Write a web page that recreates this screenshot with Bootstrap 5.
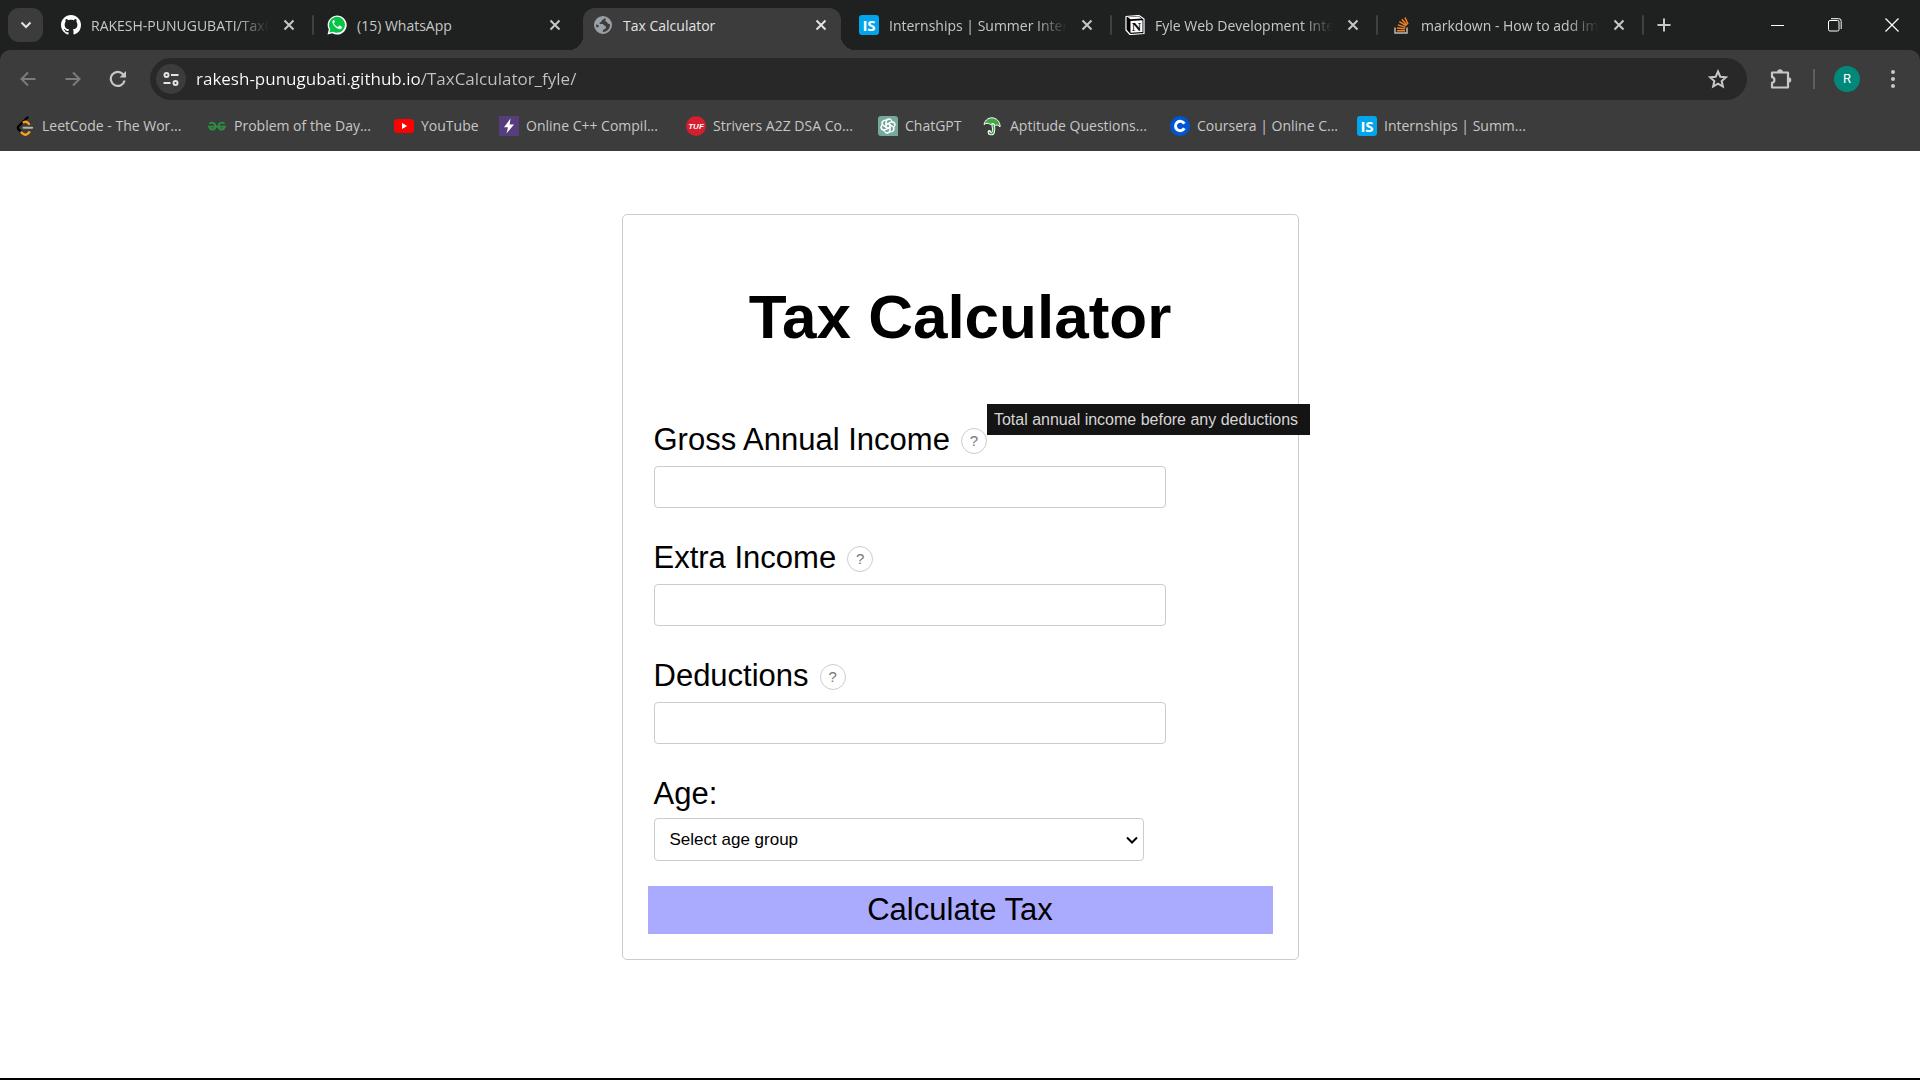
<!DOCTYPE html>
<html lang="en">
<head>
<meta charset="utf-8">
<meta name="viewport" content="width=device-width, initial-scale=1">
<title>Tax Calculator</title>
<link href="https://cdn.jsdelivr.net/npm/bootstrap@5.3.0/dist/css/bootstrap.min.css" rel="stylesheet">
<style>
  body { font-family: "Liberation Sans", Arial, sans-serif; color: #000; background: #fff; }
  button, input, select { font-family: inherit; }

  /* browser chrome */
  .chrome { background: #1f2120; color: #c7c7c7; font-family: "Open Sans", "Noto Sans", sans-serif; font-size: 14px; line-height: 20px; }
  .chrome svg { display: block; flex: none; }
  .plain-btn { background: none; border: 0; padding: 0; color: inherit; display: flex; align-items: center; justify-content: center; flex: none; }
  .tab-strip { height: 50px; }
  .tab-search { width: 35px; height: 34px; border-radius: 11px; background: #3c3c3c; margin: 8px 8px 0 8px; color: #e3e3e3; }
  .tab-box { flex: 0 1 258px; min-width: 0; height: 42px; margin-top: 8px; padding: 0 10px 8px; gap: 10px; position: relative; }
  .tab-box .plain-btn { width: 20px; height: 20px; }
  .tab-title { flex: 1 1 0; min-width: 0; padding-top: 2px; overflow: hidden; white-space: nowrap; color: inherit; text-decoration: none; }
  .tab-title.fade-end { -webkit-mask-image: linear-gradient(90deg, #000 calc(100% - 32px), transparent); mask-image: linear-gradient(90deg, #000 calc(100% - 32px), transparent); }
  .tab-sep { flex: 0 0 8px; height: 20px; margin-top: 15px; display: flex; justify-content: center; }
  .tab-sep.seen::after { content: ""; width: 2px; background: #3f4040; border-radius: 1px; }
  .tab-box.current { background: #3c3c3c; color: #e3e3e3; border-radius: 12px 12px 0 0; }
  .tab-box.current::before, .tab-box.current::after { content: ""; position: absolute; bottom: 0; width: 14px; height: 14px; }
  .tab-box.current::before { right: 100%; background: radial-gradient(circle at 0 0, transparent 14px, #3c3c3c 14px); }
  .tab-box.current::after { left: 100%; background: radial-gradient(circle at 100% 0, transparent 14px, #3c3c3c 14px); }
  .new-tab { width: 34px; height: 34px; margin: 8px 0 0; }
  .win-btn { width: 57px; height: 50px; color: #fff; }

  .toolbar { background: #3c3c3c; border-radius: 10px 10px 0 0; }
  .nav-row { height: 58px; padding-left: 5px; padding-right: 5px; }
  .nav-row .step { width: 45px; height: 42px; color: #7c7c7c; }
  .nav-row .step.ready { color: #c7c7c7; }
  .omnibox { height: 42px; border-radius: 21px; background: #282828; padding: 0 18px 0 6px; margin-left: 10px; gap: 10px; }
  .site-info { width: 30px; height: 30px; border-radius: 50%; background: #3c3c3c; color: #e3e3e3; }
  .url-field { flex: 1 1 0; min-width: 0; border: 0; outline: 0; padding: 0; font-size: 17px; line-height: 24px; color: #fff;
    background: linear-gradient(90deg, #fff 224px, #c3c3c3 224px); -webkit-background-clip: text; background-clip: text; -webkit-text-fill-color: transparent; }
  .ext-btn { width: 42px; margin-left: 13px; }
  .tool-sep { width: 2px; height: 20px; background: #5d5d5d; margin: 0 19px 0 11px; }
  .avatar { width: 26px; height: 26px; border-radius: 50%; background: #00897b; color: #fff; font-family: Roboto, sans-serif; font-size: 13px; }
  .menu-btn { width: 45px; margin-left: 10px; }
  .bookmarks { height: 43px; padding: 0 0 8px 15px; }
  .bookmarks a { color: inherit; text-decoration: none; display: flex; align-items: center; gap: 7px; white-space: nowrap; }
  .bm-l { flex: 0 0 192px; }
  .bm-m { flex: 0 0 187px; }
  .bm-s { flex: 0 0 105px; }

  /* page */
  .calc-card { width: 677px; max-width: 100%; margin-top: 63px; padding: 25px; border: 1px solid #ccc; border-radius: 5px; }
  .calc-card h1 { font-size: 62px; line-height: 72px; font-weight: 700; margin: 41px 0 67px; }
  .calc-form { gap: 30px; padding-left: 6px; }
  .field { gap: 6px; }
  .field.tight { gap: 4px; }
  .field-head { height: 40px; gap: 11px; }
  .field-head label { font-size: 31px; line-height: 40px; }
  .help { position: relative; margin-top: 2px; }
  .help button { width: 26px; height: 26px; border: 1px solid #ccc; border-radius: 50%; background: #fff; color: #777; font-size: 15px; line-height: 24px; padding: 0; display: block; }
  .tip-text { position: absolute; left: 100%; top: -24px; background: #141414; color: #d6d6d6; font-size: 16px; line-height: 21px; padding: 5px 12px 5px 7px; white-space: nowrap; }
  .money { width: 512px; max-width: 100%; height: 42px; border: 1px solid #ccc; border-radius: 4px; padding: 0 12px; font-size: 17px; }
  .age-select { width: 490px; max-width: 100%; height: 43px; border: 1px solid #ccc; border-radius: 4px; color: #000; padding: 0 24px 0 15px; font-size: 17px; -webkit-appearance: none; appearance: none;
    background: #fff url("data:image/svg+xml,%3Csvg xmlns='http://www.w3.org/2000/svg' width='12' height='8' viewBox='0 0 12 8'%3E%3Cpath d='M1 1.500l5 5 5-5' fill='none' stroke='%23000' stroke-width='2'/%3E%3C/svg%3E") no-repeat right 5px center; }
  .calc-btn { width: 100%; margin-top: 25px; height: 48px; border: 0; background: #aaf; color: #000; font-size: 31px; line-height: 36px; padding: 0; }
  .screen-edge { height: 2px; background: #000; }
</style>
<script src="https://cdn.jsdelivr.net/npm/bootstrap@5.3.0/dist/js/bootstrap.bundle.min.js"></script>
</head>
<body class="d-flex flex-column min-vh-100">

<svg width="0" height="0" class="position-absolute" aria-hidden="true">
  <symbol id="x" viewBox="0 0 20 20"><path d="M5.5 5.5l9 9m0-9l-9 9" stroke="currentColor" stroke-width="2" fill="none"/></symbol>
  <symbol id="is" viewBox="0 0 20 20"><rect width="20" height="20" rx="3" fill="#00a5ec"/><text x="10" y="15.5" text-anchor="middle" font-family="Open Sans, sans-serif" font-weight="700" font-size="15" fill="#fff">IS</text></symbol>
</svg>

<header class="chrome">
  <div class="tab-strip d-flex">
    <button class="plain-btn tab-search" aria-label="Search tabs"><svg width="12" height="10" viewBox="0 0 12 10"><path d="M1.5 2.5L6 7l4.500-4.500" fill="none" stroke="currentColor" stroke-width="2"/></svg></button>

    <div class="tab-box d-flex align-items-center">
      <svg width="20" height="20" viewBox="0 0 16 16" fill="#fff"><path d="M8 0C3.580 0 0 3.580 0 8c0 3.540 2.290 6.530 5.470 7.590.4.070.550-.17.550-.38 0-.19-.01-.82-.01-1.490-2.010.37-2.530-.49-2.690-.94-.09-.23-.48-.94-.82-1.130-.28-.15-.68-.52-.01-.53.630-.01 1.080.580 1.230.820.720 1.210 1.870.870 2.330.660.070-.52.280-.87.510-1.070-1.780-.2-3.640-.89-3.640-3.950 0-.87.310-1.590.820-2.150-.08-.2-.36-1.020.080-2.120 0 0 .670-.21 2.200.820.640-.18 1.320-.27 2-.27s1.360.090 2 .270c1.530-1.040 2.200-.82 2.200-.82.440 1.100.160 1.920.080 2.120.510.560.820 1.270.820 2.150 0 3.070-1.870 3.750-3.650 3.950.290.250.540.730.540 1.480 0 1.070-.01 1.930-.01 2.200 0 .210.150.460.550.380A8.010 8.010 0 0 0 16 8c0-4.420-3.580-8-8-8z"/></svg>
      <a class="tab-title fade-end" href="#">RAKESH-PUNUGUBATI/TaxCalculator</a>
      <button class="plain-btn" aria-label="Close tab"><svg width="20" height="20"><use href="#x"/></svg></button>
    </div>
    <span class="tab-sep seen"></span>

    <div class="tab-box d-flex align-items-center">
      <svg width="20" height="20" viewBox="0 0 20 20"><path d="M.5 19.500l1.300-4.900A9.500 9.500 0 1 1 5.400 18.300z" fill="#fff"/><path d="M2.400 17.600l.9-3.300A8 8 0 1 1 6 16.800z" fill="#05c446"/><path d="M7.400 5.300c-.3-.6-.8-.5-1.300 0-1 1-1 2.600.2 4.300 1.600 2.400 3.500 4 5.700 4.500 1.300.3 2.700-.5 2.900-1.700.1-.6 0-.7-.4-.9l-1.800-.9c-.3-.1-.5 0-.7.2l-.8 1c-.2.200-.4.200-.7.100-1.600-.7-2.700-1.800-3.500-3.200-.1-.3 0-.4.100-.6l.7-.9c.1-.2.100-.3 0-.5z" fill="#fff"/></svg>
      <a class="tab-title" href="#">(15) WhatsApp</a>
      <button class="plain-btn" aria-label="Close tab"><svg width="20" height="20"><use href="#x"/></svg></button>
    </div>
    <span class="tab-sep"></span>

    <div class="tab-box current d-flex align-items-center">
      <svg width="20" height="20" viewBox="0 0 20 20"><circle cx="10" cy="10" r="8" fill="#3c3c3c" stroke="#9aa0a6" stroke-width="2"/><path d="M2 9C2 5 5 2 9 2c1.500 0 2.500.3 2.500.8 0 1.200-.8 1.700-1.900 2C8.500 5.100 9 6.400 8 7c-1 .5-1.800.8-1.500 1.500.3.700 2 .3 3.200.500 1.300.3 1.200 1.600 2.300 2 1 .4 1.300 1.200.7 2.200-.7 1.100-2.500 1-2.700 2.300L9.500 18C6 18 3.200 15.500 2.300 12c1.500.4 3.200.3 3.700-.5C5 9.500 3.500 9.500 2 9z" fill="#9aa0a6"/><path d="M12.500 2.500c.8 1 .2 2-.3 3 .2 1.500 1.800 1 2.100 2.200.2 1 1.500 1.400 3.600 1.300C17.500 6 15.500 3.500 12.500 2.500z" fill="#9aa0a6"/></svg>
      <a class="tab-title" href="#">Tax Calculator</a>
      <button class="plain-btn" aria-label="Close tab"><svg width="20" height="20"><use href="#x"/></svg></button>
    </div>
    <span class="tab-sep"></span>

    <div class="tab-box d-flex align-items-center">
      <svg width="20" height="20"><use href="#is"/></svg>
      <a class="tab-title fade-end" href="#">Internships | Summer Internship</a>
      <button class="plain-btn" aria-label="Close tab"><svg width="20" height="20"><use href="#x"/></svg></button>
    </div>
    <span class="tab-sep seen"></span>

    <div class="tab-box d-flex align-items-center">
      <svg width="20" height="20" viewBox="0 0 20 20"><path d="M1 1.500L14 .5l5 3.500v14.500L5 19.500 1 15z" fill="#000" stroke="#fff" stroke-width="1.200" stroke-linejoin="round"/><path d="M2.500 2.300l11-.8 3 2L5.500 4.300z" fill="#fff"/><path d="M5.500 6L17.500 5.300V17L5.500 17.800z" fill="#fff"/><text x="11.500" y="16" text-anchor="middle" font-family="Liberation Serif, serif" font-weight="700" font-size="13" fill="#000">N</text></svg>
      <a class="tab-title fade-end" href="#">Fyle Web Development Internship</a>
      <button class="plain-btn" aria-label="Close tab"><svg width="20" height="20"><use href="#x"/></svg></button>
    </div>
    <span class="tab-sep seen"></span>

    <div class="tab-box d-flex align-items-center">
      <svg width="20" height="20" viewBox="0 0 20 20" fill="none"><path d="M4 12.500v5.500h12v-5.500" stroke="#bcbbbb" stroke-width="1.500"/><path d="M6 15.800h8M6 13l8 .8M6.800 9.900l7.600 2.200M8.300 6.700l6.700 4M10.800 4.200l5.200 6M14 2.500l3 6.800" stroke="#f48024" stroke-width="1.500"/></svg>
      <a class="tab-title fade-end" href="#">markdown - How to add images</a>
      <button class="plain-btn" aria-label="Close tab"><svg width="20" height="20"><use href="#x"/></svg></button>
    </div>
    <span class="tab-sep seen"></span>
    <button class="plain-btn new-tab" aria-label="New tab"><svg width="14" height="14" viewBox="0 0 14 14"><path d="M7 .5v13M.5 7h13" stroke="currentColor" stroke-width="2"/></svg></button>

    <div class="d-flex ms-auto">
      <button class="plain-btn win-btn" aria-label="Minimize"><svg width="13" height="13" viewBox="0 0 13 13"><path d="M0 6.500h13" stroke="currentColor"/></svg></button>
      <button class="plain-btn win-btn" aria-label="Restore"><svg width="14" height="14" viewBox="0 0 14 14" fill="none" stroke="currentColor"><rect x=".5" y="2.500" width="10.500" height="10.500" rx="1.500"/><path d="M3 .7h7.500a2.500 2.500 0 0 1 2.700 2.700V11"/></svg></button>
      <button class="plain-btn win-btn" aria-label="Close"><svg width="14" height="14" viewBox="0 0 14 14"><path d="M.5.5l13 13m0-13l-13 13" stroke="currentColor" stroke-width="1.200"/></svg></button>
    </div>
  </div>

  <div class="toolbar">
    <div class="nav-row d-flex align-items-center">
      <button class="plain-btn step" aria-label="Back"><svg width="16" height="16" viewBox="0 0 16 16"><path d="M15.500 8H2M8 1.500L1.500 8 8 14.500" fill="none" stroke="currentColor" stroke-width="2"/></svg></button>
      <button class="plain-btn step" aria-label="Forward"><svg width="16" height="16" viewBox="0 0 16 16"><path d="M.5 8H14M8 1.500L14.500 8 8 14.500" fill="none" stroke="currentColor" stroke-width="2"/></svg></button>
      <button class="plain-btn step ready" aria-label="Reload"><svg width="18" height="18" viewBox="0 0 18 18"><path d="M15.600 10.500A7 7 0 1 1 14 4.200l1.500 1.500" fill="none" stroke="currentColor" stroke-width="2.200"/><path d="M17 1v6.500h-6.500z" fill="currentColor"/></svg></button>
      <div class="omnibox d-flex align-items-center flex-grow-1">
        <button class="plain-btn site-info" aria-label="View site information"><svg width="16" height="14" viewBox="0 0 16 14" fill="none" stroke="currentColor" stroke-width="2"><circle cx="3.500" cy="3" r="2"/><path d="M8 3h7.500M.5 11h7"/><circle cx="12.500" cy="11" r="2"/></svg></button>
        <input class="url-field" type="text" aria-label="Address" value="rakesh-punugubati.github.io/TaxCalculator_fyle/">
        <button class="plain-btn" aria-label="Bookmark this tab"><svg width="22" height="22" viewBox="0 0 24 24"><path d="M12 3.800l2.500 5.700 6.100.6-4.600 4.100 1.300 6L12 17l-5.300 3.200 1.300-6-4.600-4.100 6.100-.6z" fill="none" stroke="currentColor" stroke-width="2.200"/></svg></button>
      </div>
      <button class="plain-btn ext-btn" aria-label="Extensions"><svg width="22" height="22" viewBox="0 0 22 22"><path d="M2 4.500h16v15H2v-4.700c3.200-.3 3.200-5.300 0-5.600z" fill="none" stroke="currentColor" stroke-width="2.200" stroke-linejoin="round"/><path d="M7.200 4a2.800 2.800 0 0 1 5.600 0zM18.500 9.200a2.800 2.800 0 0 1 0 5.600z" fill="currentColor"/></svg></button>
      <span class="tool-sep"></span>
      <button class="plain-btn avatar" aria-label="Profile">R</button>
      <button class="plain-btn menu-btn" aria-label="Menu"><svg width="6" height="20" viewBox="0 0 6 20" fill="currentColor"><circle cx="3" cy="3" r="2"/><circle cx="3" cy="10" r="2"/><circle cx="3" cy="17" r="2"/></svg></button>
    </div>

    <nav class="bookmarks d-flex align-items-center" aria-label="Bookmarks">
      <a class="bm-l" href="#"><svg width="20" height="20" viewBox="0 0 20 20" fill="none" stroke-linecap="round" stroke-width="2.400"><path d="M12.500 1.500L3.800 10c-1.200 1.200-1.200 2.500 0 3.700l2.700 2.700" stroke="#000"/><path d="M8.700 6.200c1.300-.8 2.700-.7 3.800.3l1.500 1.500M6.500 16.400l1.300 1.200c1.700 1.400 3.500 1.300 5 0l1.500-1.400" stroke="#ffa116"/><path d="M8.500 11.800h8.700" stroke="#b3b3b3" stroke-width="2"/></svg>LeetCode - The Wor...</a>
      <a class="bm-m" href="#"><svg width="20" height="20" viewBox="0 0 20 20" fill="none" stroke="#2f8d46" stroke-width="1.800"><path d="M1 10.700h18M2.500 7.800c2-2 6-1.300 6 2.600 0 3.800-5.500 4.300-6 .5M17.500 7.800c-2-2-6-1.300-6 2.600 0 3.800 5.500 4.300 6 .5"/></svg>Problem of the Day...</a>
      <a class="bm-s" href="#"><svg width="20" height="20" viewBox="0 0 20 20"><rect y="3" width="20" height="14" rx="3.500" fill="#f00"/><path d="M8 7l5.200 3L8 13z" fill="#fff"/></svg>YouTube</a>
      <a class="bm-m" href="#"><svg width="20" height="20" viewBox="0 0 20 20"><path d="M0 0h20v20H0z" fill="#563d7c"/><path d="M11.500 2.500L5 11.200h4l-1.500 6.300L15 8.500h-4.300z" fill="#fff"/></svg>Online C++ Compil...</a>
      <a class="bm-l" href="#"><svg width="20" height="20" viewBox="0 0 20 20"><circle cx="10" cy="10" r="10" fill="#d41f30"/><text x="10" y="13" text-anchor="middle" font-family="Liberation Sans, sans-serif" font-weight="700" font-style="italic" font-size="8" fill="#fff">TUF</text></svg>Strivers A2Z DSA Co...</a>
      <a class="bm-s" href="#"><svg width="20" height="20" viewBox="0 0 20 20"><path d="M3 0h14a3 3 0 0 1 3 3v17H3a3 3 0 0 1-3-3V3a3 3 0 0 1 3-3z" fill="#74aa9c"/><g fill="none" stroke="#fff" stroke-width="1.100"><path id="petal" d="M8 12V6.300c0-3.600 5-4 6.100-.9M8 9l4.800-2.800c2.200-1.200 4.600.5 4.300 3"/><use href="#petal" transform="rotate(60 10 10)"/><use href="#petal" transform="rotate(120 10 10)"/><use href="#petal" transform="rotate(180 10 10)"/><use href="#petal" transform="rotate(240 10 10)"/><use href="#petal" transform="rotate(300 10 10)"/></g></svg>ChatGPT</a>
      <a class="bm-m" href="#"><svg width="20" height="20" viewBox="0 0 20 20"><path d="M10 8.500c.7 2.500 1 5 .3 7.500-.7 2.300-4 2.200-4-.3" fill="none" stroke="#fff" stroke-width="3.400" stroke-linecap="round"/><path d="M1 8.500C2 3.500 6.500 1 10.500 2c4 1 7 4.500 6.500 9-1.500-2-3-2.300-4.300-1.600C11 7.500 9.300 7 7.500 8.500 5 6.800 3 7 1 8.500z" fill="#3fa845" stroke="#fff" stroke-width="1"/><path d="M10 8.500c.7 2.500 1 5 .3 7.500-.7 2.300-4 2.200-4-.3" fill="none" stroke="#3fa845" stroke-width="1.500"/></svg>Aptitude Questions...</a>
      <a class="bm-m" href="#"><svg width="20" height="20" viewBox="0 0 20 20"><circle cx="10" cy="10" r="10" fill="#0056d2"/><path d="M14.300 12.300A4.700 4.700 0 1 1 14.300 7.700" fill="none" stroke="#fff" stroke-width="3"/></svg>Coursera | Online C...</a>
      <a class="bm-m" href="#"><svg width="20" height="20"><use href="#is"/></svg>Internships | Summ...</a>
    </nav>
  </div>
</header>

<main class="flex-grow-1 d-flex justify-content-center align-items-start">
  <form class="calc-card" onsubmit="return false">
    <h1 class="text-center">Tax Calculator</h1>
    <div class="calc-form d-flex flex-column">
      <div class="field d-flex flex-column">
        <div class="field-head d-flex align-items-center">
          <label for="gross">Gross Annual Income</label>
          <span class="help"><button type="button" aria-describedby="gross-tip">?</button><span class="tip-text" id="gross-tip" role="tooltip">Total annual income before any deductions</span></span>
        </div>
        <input class="money" id="gross" type="text">
      </div>
      <div class="field d-flex flex-column">
        <div class="field-head d-flex align-items-center">
          <label for="extra">Extra Income</label>
          <span class="help"><button type="button">?</button></span>
        </div>
        <input class="money" id="extra" type="text">
      </div>
      <div class="field d-flex flex-column">
        <div class="field-head d-flex align-items-center">
          <label for="deductions">Deductions</label>
          <span class="help"><button type="button">?</button></span>
        </div>
        <input class="money" id="deductions" type="text">
      </div>
      <div class="field tight d-flex flex-column">
        <div class="field-head d-flex align-items-center"><label for="age">Age:</label></div>
        <select class="age-select" id="age">
          <option>Select age group</option>
        </select>
      </div>
    </div>
    <button class="calc-btn" type="submit">Calculate Tax</button>
  </form>
</main>
<div class="screen-edge"></div>
</body>
</html>
